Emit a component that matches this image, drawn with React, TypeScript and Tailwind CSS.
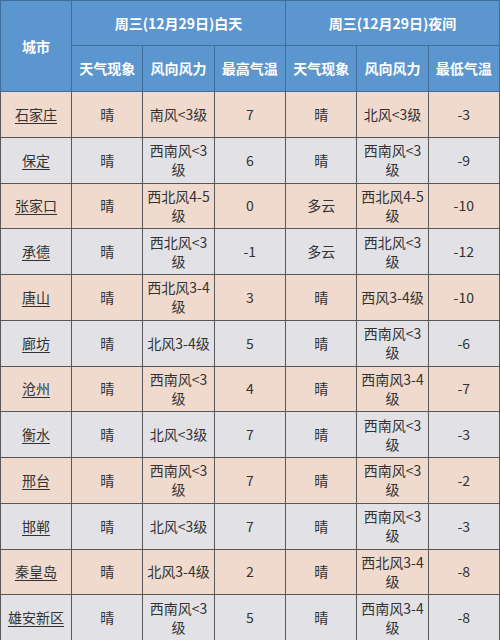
const rows: string[][] = [
  ["石家庄", "晴", "南风<3级", "7", "晴", "北风<3级", "-3"],
  ["保定", "晴", "西南风<3级", "6", "晴", "西南风<3级", "-9"],
  ["张家口", "晴", "西北风4-5级", "0", "多云", "西北风4-5级", "-10"],
  ["承德", "晴", "西北风<3级", "-1", "多云", "西北风<3级", "-12"],
  ["唐山", "晴", "西北风3-4级", "3", "晴", "西风3-4级", "-10"],
  ["廊坊", "晴", "北风3-4级", "5", "晴", "西南风<3级", "-6"],
  ["沧州", "晴", "西南风<3级", "4", "晴", "西南风3-4级", "-7"],
  ["衡水", "晴", "北风<3级", "7", "晴", "西南风<3级", "-3"],
  ["邢台", "晴", "西南风<3级", "7", "晴", "西南风<3级", "-2"],
  ["邯郸", "晴", "北风<3级", "7", "晴", "西南风<3级", "-3"],
  ["秦皇岛", "晴", "北风3-4级", "2", "晴", "西北风3-4级", "-8"],
  ["雄安新区", "晴", "西南风<3级", "5", "晴", "西南风3-4级", "-8"],
];

const subHeads = ["天气现象", "风向风力", "最高气温", "天气现象", "风向风力", "最低气温"];

const App = () => {
  return (
    <div className="w-[500px] h-[640px] overflow-hidden bg-white font-['Noto_Sans_CJK_SC','Noto_Sans',sans-serif]">
      <table className="w-[500px] table-fixed border-collapse text-[14px] leading-[19px] text-center">
        <thead className="bg-[#5b96cf] text-white font-semibold">
          <tr className="h-[45px]">
            <th rowSpan={2} className="border border-[#3d6e9c] w-[71px]">城市</th>
            <th colSpan={3} className="border border-[#3d6e9c]">周三(12月29日)白天</th>
            <th colSpan={3} className="border border-[#3d6e9c]">周三(12月29日)夜间</th>
          </tr>
          <tr className="h-[46px]">
            {subHeads.map((h, i) => (
              <th key={i} className="border border-[#3d6e9c] font-semibold">{h}</th>
            ))}
          </tr>
        </thead>
        <tbody className="text-[#333]">
          {rows.map((r, i) => (
            <tr key={r[0]} className={`h-[45.75px] ${i % 2 === 0 ? "bg-[#efdacd]" : "bg-[#e2e2e6]"}`}>
              {r.map((c, j) => (
                <td key={j} className="border border-[#585858] px-[3px]">
                  {j === 0 ? <span className="underline underline-offset-[3px]">{c}</span> : c}
                </td>
              ))}
            </tr>
          ))}
        </tbody>
      </table>
    </div>
  );
};

export default App;
